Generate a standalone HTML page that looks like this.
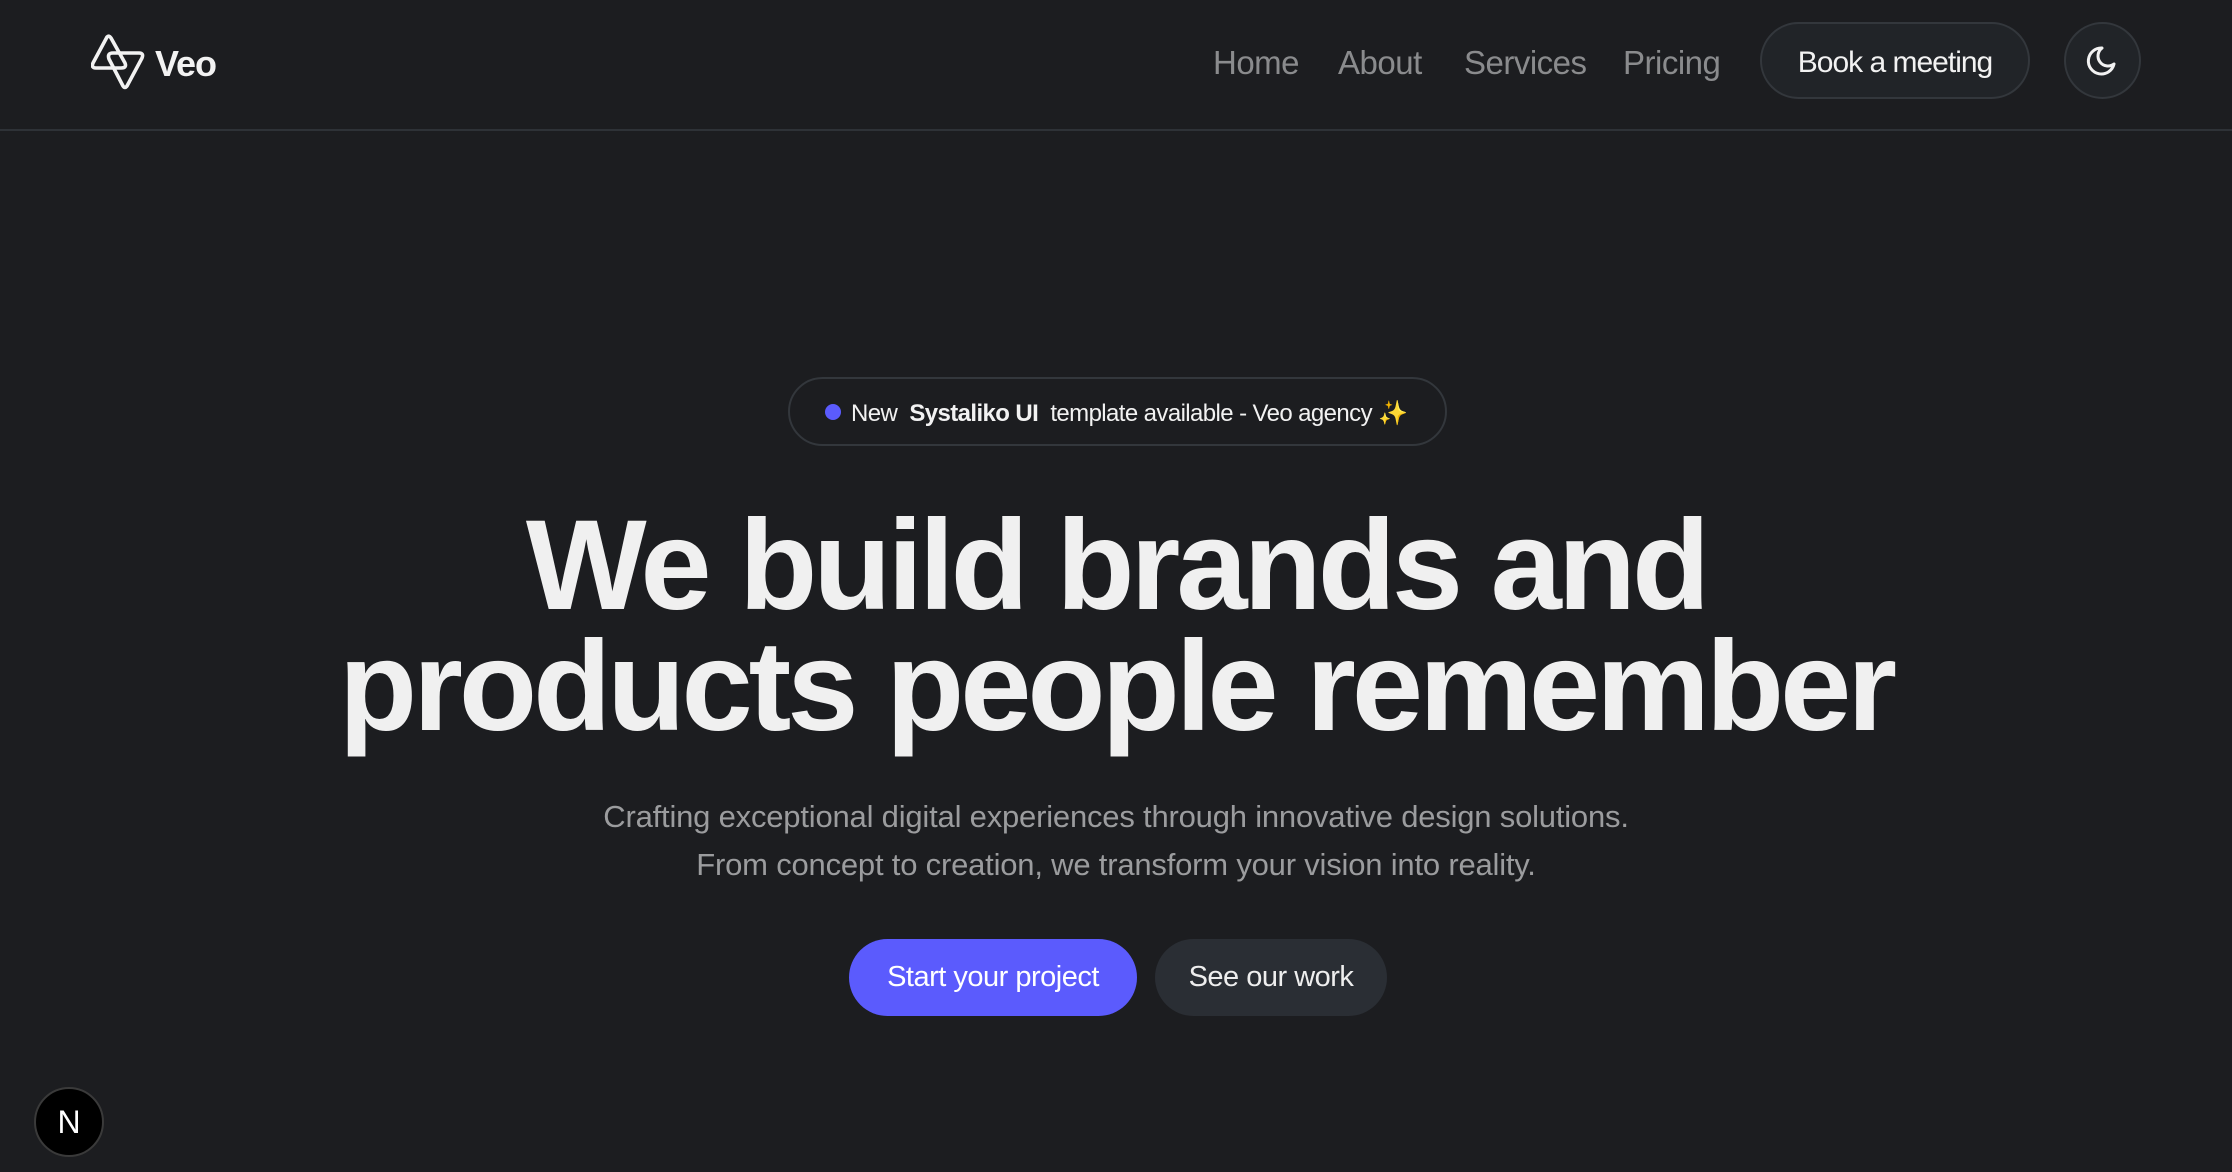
<!DOCTYPE html>
<html><head><meta charset="utf-8"><style>
*{margin:0;padding:0;box-sizing:border-box}
html,body{width:2232px;height:1172px;background:#1c1d20;overflow:hidden;font-family:"Liberation Sans",sans-serif;color:#f2f2f2}
.nav{position:absolute;left:0;top:0;width:2232px;height:131px;border-bottom:2px solid #2e3237}
.logo{position:absolute;left:91px;top:34px}
.brand{position:absolute;left:155px;top:43px;font-size:36px;font-weight:bold;letter-spacing:-1px}
.links a{position:absolute;top:44px;font-size:33px;color:#8a8b8d;text-decoration:none;letter-spacing:-0.5px}
.btn{position:absolute;border:2px solid #33373c;background:#212428;border-radius:40px}
.badge{position:absolute;left:788px;top:377px;width:659px;height:69px;border:2px solid #33373c;border-radius:36px;font-size:24px;letter-spacing:-0.6px;line-height:69px;padding-left:35px;white-space:nowrap}
.dot{display:inline-block;width:16px;height:16px;border-radius:50%;background:#5b5bfd;margin-right:10px;vertical-align:1px}
h1{position:absolute;left:0;width:2232px;top:505px;text-align:center;font-size:128px;line-height:121px;font-weight:bold;letter-spacing:-4px;color:#f0f0f0}
.sub{position:absolute;left:0;width:2232px;top:793px;text-align:center;font-size:31px;line-height:48px;color:#9b9c9e;letter-spacing:-0.2px}
.cta{position:absolute;top:939px;height:77px;border-radius:39px;font-size:29px;line-height:77px;text-align:center;letter-spacing:-0.5px}
.n{position:absolute;left:34px;top:1087px;width:70px;height:70px;border-radius:50%;background:#000;border:2px solid #3a3a3a;color:#fff;font-size:32px;text-align:center;line-height:66px}
</style></head><body>
<div class="nav">
<svg class="logo" width="56" height="56" viewBox="0 0 56 56" fill="none" stroke="#f2f2f2" stroke-width="3.6" stroke-linejoin="round">
<path d="M16 3 Q18 1 20 4 L34 29 Q36 34 30 34 L5 34 Q0 34 2 29 Z"/>
<path d="M36 52 Q34 55 32 52 L18 25 Q16 19 22 19 L48 19 Q53 19 51 24 Z"/>
</svg>
<div class="brand">Veo</div>
<div class="links">
<a style="left:1213px">Home</a><a style="left:1338px">About</a><a style="left:1464px">Services</a><a style="left:1623px">Pricing</a>
</div>
<div class="btn" style="left:1760px;top:22px;width:270px;height:77px;font-size:30px;line-height:77px;text-align:center;letter-spacing:-1px">Book a meeting</div>
<div class="btn" style="left:2064px;top:22px;width:77px;height:77px">
<svg width="73" height="73" viewBox="0 0 73 73"><path d="M36 24 A13 13 0 1 0 48 40 A10 10 0 0 1 36 24 Z" fill="none" stroke="#f2f2f2" stroke-width="3" stroke-linejoin="round"/></svg>
</div>
</div>
<div class="badge"><span class="dot"></span>New&nbsp; <b>Systaliko UI</b>&nbsp; template available - Veo agency <span style="color:#f5c542">✨</span></div>
<h1>We build brands and<br>products people remember</h1>
<div class="sub">Crafting exceptional digital experiences through innovative design solutions.<br>From concept to creation, we transform your vision into reality.</div>
<div class="cta" style="left:849px;width:288px;background:#5b5bfd;color:#fff">Start your project</div>
<div class="cta" style="left:1155px;width:232px;background:#2a2e34;color:#eee">See our work</div>
<div class="n">N</div>
</body></html>
